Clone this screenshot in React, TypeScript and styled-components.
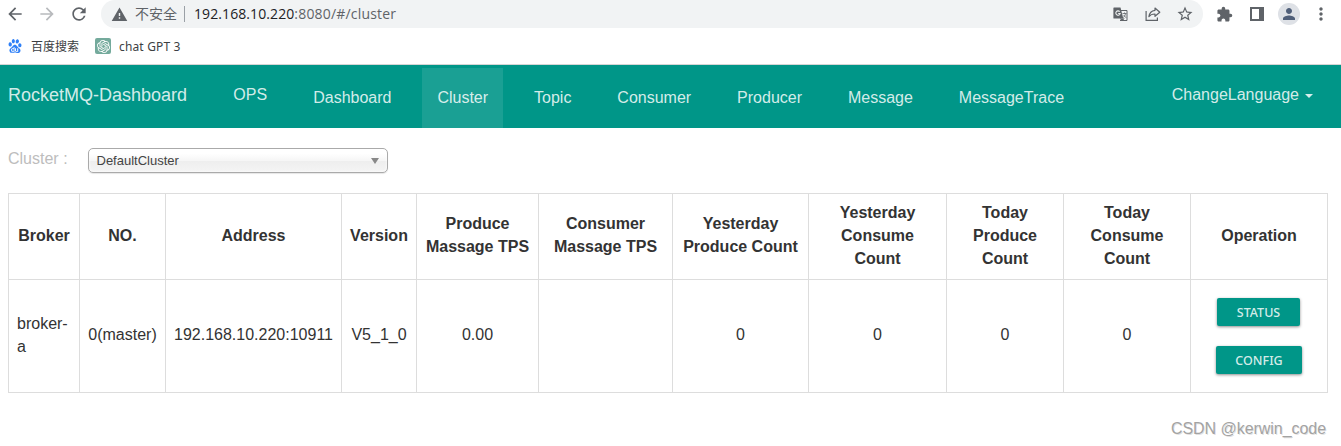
import React from "react";
import styled, { createGlobalStyle } from "styled-components";
import {
  MdArrowBack,
  MdArrowForward,
  MdExtension,
  MdMoreVert,
  MdPerson,
  MdRefresh,
  MdStarOutline,
  MdWarning,
} from "react-icons/md";
import { SiBaidu, SiOpenai } from "react-icons/si";

const GlobalStyle = createGlobalStyle`
  * { box-sizing: border-box; }
  body {
    margin: 0;
    background: #fff;
    color: #333;
    font-family: "Liberation Sans", Arial, sans-serif;
    font-size: 16px;
    overflow: hidden;
  }
`;

const Page = styled.div`
  height: 446px;
  display: flex;
  flex-direction: column;
`;

const BrowserBar = styled.div`
  height: 28px;
  display: flex;
  align-items: center;
  color: #5f6368;
  padding-left: 5px;
`;

const ToolIcon = styled.span<{ $gap?: number; $color?: string }>`
  display: flex;
  flex: none;
  margin-right: ${(p) => p.$gap ?? 0}px;
  color: ${(p) => p.$color ?? "#5f6368"};
`;

const AddressBar = styled.div`
  width: 1102px;
  height: 28px;
  margin-right: 13px;
  padding: 0 9px 0 10px;
  border-radius: 14px;
  background: #f1f3f4;
  display: flex;
  align-items: center;
`;

const Insecure = styled.span`
  margin: 0 0 2px 7px;
  font: 14px/20px "Noto Sans CJK SC", sans-serif;
  color: #5f6368;
`;

const Separator = styled.span`
  width: 1px;
  height: 16px;
  margin: 0 9px 0 7px;
  background: #9aa0a6;
`;

const Url = styled.span`
  flex: 1;
  font: 14px/20px "Open Sans", "Noto Sans", sans-serif;
  letter-spacing: 0.18px;
  color: #5f6368;
`;

const Host = styled.span`
  letter-spacing: 0.09px;
  color: #202124;
`;

const Avatar = styled.span`
  width: 22px;
  height: 22px;
  margin: 0 11px 0 14px;
  border-radius: 50%;
  background: #dee1e6;
  color: #505f79;
  display: flex;
  align-items: center;
  justify-content: center;
`;

const Bookmarks = styled.div`
  height: 37px;
  border-bottom: 1px solid #d5d5d5;
  display: flex;
  align-items: center;
  padding-left: 8px;
  font: 12px/18px "Noto Sans", "Noto Sans CJK SC", sans-serif;
  color: #3c4043;
`;

const BookmarkLabel = styled.span<{ $left: number; $right?: number; $spacing?: number }>`
  margin-left: ${(p) => p.$left}px;
  margin-right: ${(p) => p.$right ?? 0}px;
  padding-top: 2px;
  letter-spacing: ${(p) => p.$spacing ?? 0}px;
`;

const ChatBadge = styled.span`
  width: 16px;
  height: 16px;
  border-radius: 2px;
  background: #74aa9c;
  color: #fff;
  display: flex;
  align-items: center;
  justify-content: center;
`;

const Navbar = styled.nav`
  height: 63px;
  background: #009688;
  color: rgba(255, 255, 255, 0.84);
  display: flex;
  align-items: flex-start;
  padding: 3px 28px 0 8px;
  line-height: 23px;
`;

const Brand = styled.span`
  width: 210px;
  padding-top: 16px;
  font-size: 18px;
`;

const NavItem = styled.a<{ $active?: boolean; $raised?: boolean }>`
  height: 60px;
  padding: ${(p) => (p.$raised ? 15 : 18)}px 15.3px 0;
  margin-right: ${(p) => (p.$raised ? 15.5 : 15.35)}px;
  background: ${(p) => (p.$active ? "rgba(255, 255, 255, 0.1)" : "transparent")};
`;

const LanguageMenu = styled.span`
  margin-left: auto;
  padding-top: 15px;
  display: flex;
  align-items: center;
  gap: 6px;
`;

const Caret = styled.span`
  margin-top: 3px;
  border-top: 4px solid currentColor;
  border-left: 4px solid transparent;
  border-right: 4px solid transparent;
`;

const Filter = styled.div`
  height: 65px;
  padding: 20px 0 0 8px;
  display: flex;
  align-items: flex-start;
`;

const FilterLabel = styled.label`
  width: 80px;
  line-height: 22px;
  color: #bdbdbd;
`;

const Select = styled.div`
  width: 300px;
  height: 25px;
  padding: 0 8px 0 7.5px;
  border: 1px solid #aaa;
  border-radius: 5px;
  background: linear-gradient(#fff 20%, #f6f6f6 50%, #eee 52%, #f4f4f4 100%);
  box-shadow: 0 0 3px #fff inset, 0 1px 1px rgba(0, 0, 0, 0.1);
  display: flex;
  align-items: center;
  justify-content: space-between;
  font-size: 13px;
  color: #444;
`;

const SelectArrow = styled.span`
  border-top: 6px solid #888;
  border-left: 4px solid transparent;
  border-right: 4px solid transparent;
`;

const Table = styled.table`
  width: 1320px;
  margin-left: 8px;
  table-layout: fixed;
  border-collapse: separate;
  border-spacing: 0;
  border: solid #ddd;
  border-width: 1px 0 0 1px;
  line-height: 23px;
`;

const Col = styled.col<{ $width: number }>`
  width: ${(p) => p.$width}px;
`;

const HeadCell = styled.th`
  height: 86px;
  padding: 0 8px 3px;
  border: solid #ddd;
  border-width: 0 1px 1px 0;
  vertical-align: middle;
`;

const Cell = styled.td<{ $left?: boolean }>`
  height: 113px;
  padding: 0 8px ${(p) => (p.$left ? 2 : 4)}px;
  border: solid #ddd;
  border-width: 0 1px 1px 0;
  vertical-align: middle;
  text-align: ${(p) => (p.$left ? "left" : "center")};
`;

const Actions = styled.div`
  display: flex;
  flex-direction: column;
  align-items: center;
  gap: 20px;
  padding-top: 4px;
`;

const ActionButton = styled.button<{ $width: number; $nudge?: number }>`
  width: ${(p) => p.$width}px;
  height: 28px;
  margin: 0 ${(p) => p.$nudge ?? 0}px 0 0;
  padding: 1px 0 0;
  border: 0;
  border-radius: 2px;
  background: #009688;
  color: rgba(255, 255, 255, 0.84);
  box-shadow: 0 1px 3px rgba(0, 0, 0, 0.45);
  font: 500 12.5px/18px "Noto Sans", sans-serif;
`;

const Watermark = styled.div`
  margin: 25px 15px 0 auto;
  font-size: 16px;
  line-height: 22px;
  color: #a3a3a3;
  letter-spacing: -0.05px;
  text-shadow: 1px 1px 0 rgba(0, 0, 0, 0.12);
`;

const columns: [string, number][] = [
  ["Broker", 71],
  ["NO.", 86],
  ["Address", 176],
  ["Version", 75],
  ["Produce Massage TPS", 122],
  ["Consumer Massage TPS", 134],
  ["Yesterday Produce Count", 136],
  ["Yesterday Consume Count", 138],
  ["Today Produce Count", 117],
  ["Today Consume Count", 127],
  ["Operation", 137],
];

const values = ["0(master)", "192.168.10.220:10911", "V5_1_0", "0.00", "", "0", "0", "0", "0"];

const links = ["Dashboard", "Cluster", "Topic", "Consumer", "Producer", "Message", "MessageTrace"];

const TranslateIcon = () => (
  <svg width="15" height="15" viewBox="0 0 15 15" fill="none" stroke="currentColor">
    <path d="M7 3.500h7v10H7" />
    <path d="M1 .5h6.500l2.800 11H1a.6.6 0 0 1-.6-.6V1.100A.6.6 0 0 1 1 .5z" fill="currentColor" stroke="none" />
    <path d="M7.500 11.500l1.500 2.500 2-2.500" fill="currentColor" />
    <path d="M9.500 6.500h4M11.500 5.500v1M12.600 6.500c-.4 2-1.300 3.200-2.300 4M10.600 8l2.500 2.800" strokeWidth=".8" />
    <path d="M6.700 4.600a2.200 2.200 0 1 0 .5 1.900H5.200" stroke="#f1f3f4" strokeWidth="1.100" />
  </svg>
);

const ShareIcon = () => (
  <svg width="16" height="16" viewBox="0 0 16 16" fill="none" stroke="currentColor" strokeWidth="1.2">
    <path d="M1.1 5v9.4h11.3v-3" />
    <path d="M10 2l4.8 4.2L10 10.3V8c-3 0-4.800.8-6.100 2.700C4.400 7 6.500 4.700 10 4.300z" strokeLinejoin="round" />
  </svg>
);

const SidePanelIcon = () => (
  <svg width="14" height="14" viewBox="0 0 14 14">
    <path fill="currentColor" fillRule="evenodd" d="M0 0h14v14H0zM2 2v10h7V2z" />
  </svg>
);

export default function App() {
  return (
    <Page>
      <GlobalStyle />
      <BrowserBar>
        <ToolIcon $gap={12}><MdArrowBack size={20} /></ToolIcon>
        <ToolIcon $gap={12} $color="#b8babd"><MdArrowForward size={20} /></ToolIcon>
        <ToolIcon $gap={12}><MdRefresh size={20} /></ToolIcon>
        <AddressBar>
          <ToolIcon><MdWarning size={17} /></ToolIcon>
          <Insecure>不安全</Insecure>
          <Separator />
          <Url><Host>192.168.10.220</Host>:8080/#/cluster</Url>
          <ToolIcon $gap={17}><TranslateIcon /></ToolIcon>
          <ToolIcon $gap={15}><ShareIcon /></ToolIcon>
          <ToolIcon><MdStarOutline size={18} /></ToolIcon>
        </AddressBar>
        <ToolIcon $gap={17}><MdExtension size={17} /></ToolIcon>
        <ToolIcon><SidePanelIcon /></ToolIcon>
        <Avatar><MdPerson size={18} /></Avatar>
        <ToolIcon><MdMoreVert size={20} /></ToolIcon>
      </BrowserBar>
      <Bookmarks>
        <ToolIcon $color="#2f80f7"><SiBaidu size={14} /></ToolIcon>
        <BookmarkLabel $left={9} $right={16}>百度搜索</BookmarkLabel>
        <ChatBadge><SiOpenai size={13} /></ChatBadge>
        <BookmarkLabel $left={8} $spacing={0.15}>chat GPT 3</BookmarkLabel>
      </Bookmarks>
      <Navbar>
        <Brand>RocketMQ-Dashboard</Brand>
        <NavItem $raised>OPS</NavItem>
        {links.map((link) => (
          <NavItem key={link} $active={link === "Cluster"}>{link}</NavItem>
        ))}
        <LanguageMenu>ChangeLanguage<Caret /></LanguageMenu>
      </Navbar>
      <Filter>
        <FilterLabel>Cluster :</FilterLabel>
        <Select>DefaultCluster<SelectArrow /></Select>
      </Filter>
      <Table>
        <colgroup>
          {columns.map(([name, width]) => <Col key={name} $width={width} />)}
        </colgroup>
        <thead>
          <tr>{columns.map(([name]) => <HeadCell key={name}>{name}</HeadCell>)}</tr>
        </thead>
        <tbody>
          <tr>
            <Cell $left>broker-a</Cell>
            {values.map((value, i) => <Cell key={i}>{value}</Cell>)}
            <Cell>
              <Actions>
                <ActionButton $width={83} $nudge={1}>STATUS</ActionButton>
                <ActionButton $width={86}>CONFIG</ActionButton>
              </Actions>
            </Cell>
          </tr>
        </tbody>
      </Table>
      <Watermark>CSDN @kerwin_code</Watermark>
    </Page>
  );
}
